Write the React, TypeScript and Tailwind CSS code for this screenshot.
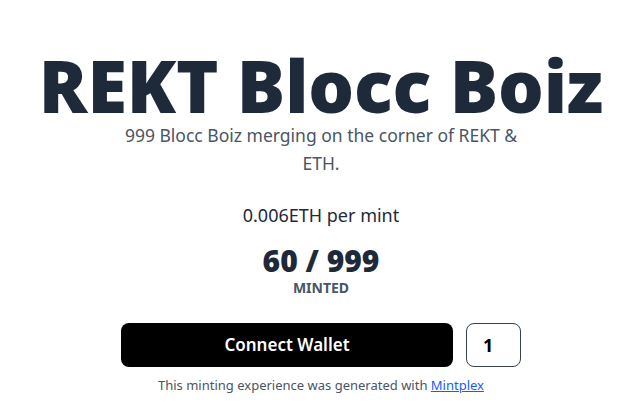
export default function App() {
  return (
    <main
      className="min-h-screen w-full bg-white flex flex-col items-center pl-[13px]"
      style={{ fontFamily: '"Noto Sans", "Open Sans", sans-serif' }}
    >
      {/* Title */}
      <h1 className="mt-[49px] text-[72px] leading-none font-black text-gray-800 tracking-[-0.2px]">
        REKT Blocc Boiz
      </h1>

      {/* Description */}
      <p className="max-w-[400px] text-center text-[17.5px] leading-7 text-gray-600">
        999 Blocc Boiz merging on the corner of REKT &amp; ETH.
      </p>

      {/* Price */}
      <p className="mt-6 text-lg leading-7 text-gray-800">0.006ETH per mint</p>

      {/* Supply */}
      <div className="mt-4 flex flex-col items-center">
        <span className="text-3xl leading-8 font-black text-gray-800">60 / 999</span>
        <span className="mt-px text-sm leading-5 font-bold text-gray-600 uppercase">Minted</span>
      </div>

      {/* Mint actions */}
      <div className="mt-[25px] flex items-center gap-[13px]">
        <button className="w-[332px] h-[44px] rounded-lg bg-black text-white text-[17px] font-semibold">
          Connect Wallet
        </button>
        <input
          type="number"
          defaultValue={1}
          className="w-[55px] h-[44px] rounded-lg border border-gray-700 px-4 text-lg font-bold text-black outline-none [appearance:textfield] [&::-webkit-inner-spin-button]:appearance-none"
        />
      </div>

      {/* Footer */}
      <p className="mt-2 text-[13px] leading-5 text-gray-600">
        This minting experience was generated with{' '}
        <a href="#" className="text-blue-600 underline">
          Mintplex
        </a>
      </p>
    </main>
  );
}
